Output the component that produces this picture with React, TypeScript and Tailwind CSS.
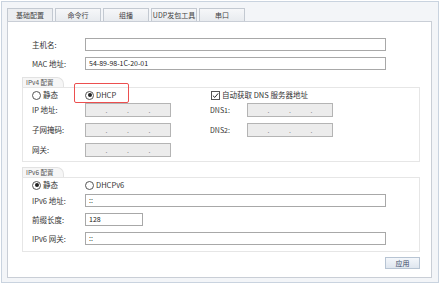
import type { ReactNode } from "react";

const font = { fontFamily: '"Noto Sans CJK SC", "Liberation Sans", sans-serif' };

const tabs = ["基础配置", "命令行", "组播", "UDP发包工具", "串口"];

function Radio({ checked, label }: { checked?: boolean; label: string }) {
  return (
    <div className="flex items-center gap-[2px] text-[7.5px] text-[#333]">
      <span className="flex size-[9px] items-center justify-center rounded-full border border-[#555] bg-white">
        {checked && <span className="size-[4px] rounded-full bg-[#222]" />}
      </span>
      <span>{label}</span>
    </div>
  );
}

function TextInput({ value = "", w = "w-[301px]" }: { value?: string; w?: string }) {
  return (
    <div
      className={`${w} flex h-[13px] items-center border border-[#a8a8a8] bg-white pl-[3px] text-[7px] leading-none text-[#222]`}
    >
      {value}
    </div>
  );
}

function IpInput() {
  return (
    <div className="flex h-[14px] w-[86px] items-center border border-[#b4b4b4] bg-[#ececec] text-[7px] leading-none text-[#888]">
      <span className="flex-1" />
      <span>.</span>
      <span className="flex-1" />
      <span>.</span>
      <span className="flex-1" />
      <span>.</span>
      <span className="flex-1" />
    </div>
  );
}

function Row({ label, children }: { label: string; children: ReactNode }) {
  return (
    <div className="flex items-center">
      <span className="w-[53px] text-[7.5px] leading-none text-[#333]">{label}</span>
      {children}
    </div>
  );
}

function Group({ title, children }: { title: string; children: ReactNode }) {
  return (
    <div className="ml-[14px] mr-[11px] flex flex-col">
      <div className="flex h-[10px] w-[42px] items-center rounded-tr-[7px] border-l border-r border-t border-[#e2e2e2] bg-[#f6f6f6] pl-[3px] text-[6.5px] leading-none text-[#555]">
        {title}
      </div>
      <div className="flex flex-col border border-[#e6e6e6] pl-[9px]">{children}</div>
    </div>
  );
}

export default function App() {
  return (
    <div className="h-[284px] w-[440px] bg-white p-px" style={font}>
      <div className="flex h-full w-full flex-col border border-[#c9d3df] bg-[#f3f5f8] pl-[5px] pr-[4px] pt-[6px]">
        <div className="flex h-[13px] gap-[2px]">
          {tabs.map((t, i) => (
            <div
              key={t}
              className={`flex w-[46px] items-center justify-center border border-b-0 border-[#c3c9d1] text-[7px] leading-none text-[#444] ${
                i === 0 ? "bg-[#eceef1]" : "bg-gradient-to-b from-[#f6f7f9] to-[#e8ebef]"
              }`}
            >
              {t}
            </div>
          ))}
        </div>

        <div className="relative flex h-[257px] w-[425px] flex-col border border-[#c9ced6] bg-white">
          <div className="flex flex-col gap-[6px] pl-[24px] pt-[16px]">
            <Row label="主机名:">
              <TextInput />
            </Row>
            <Row label="MAC 地址:">
              <TextInput value="54-89-98-1C-20-01" />
            </Row>
          </div>

          <div className="mt-[7px]">
            <Group title="IPv4 配置">
              <div className="flex h-[12px] items-center pt-[2px]">
                <div className="w-[53px]">
                  <Radio label="静态" />
                </div>
                <div className="w-[126px]">
                  <Radio checked label="DHCP" />
                </div>
                <div className="flex items-center gap-[2px] text-[7.5px] text-[#333]">
                  <span className="flex size-[9px] items-center justify-center border border-[#555] bg-white">
                    <svg viewBox="0 0 8 8" className="size-[7px]">
                      <path d="M1 4.2 L3.2 6.2 L7 1.6" fill="none" stroke="#222" strokeWidth="1.1" />
                    </svg>
                  </span>
                  <span>自动获取 DNS 服务器地址</span>
                </div>
              </div>
              <div className="flex flex-col gap-[6px] pb-[4px] pt-[3px]">
                <div className="flex items-center">
                  <Row label="IP 地址:">
                    <IpInput />
                  </Row>
                  <span className="ml-[39px] w-[37px] text-[7px] leading-none text-[#333]">DNS1:</span>
                  <IpInput />
                </div>
                <div className="flex items-center">
                  <Row label="子网掩码:">
                    <IpInput />
                  </Row>
                  <span className="ml-[39px] w-[37px] text-[7px] leading-none text-[#333]">DNS2:</span>
                  <IpInput />
                </div>
                <Row label="网关:">
                  <IpInput />
                </Row>
              </div>
            </Group>
          </div>

          <div className="mt-[5px]">
            <Group title="IPv6 配置">
              <div className="flex h-[12px] items-center pt-[2px]">
                <div className="w-[53px]">
                  <Radio checked label="静态" />
                </div>
                <Radio label="DHCPv6" />
              </div>
              <div className="flex flex-col gap-[6px] pb-[6px] pt-[4px]">
                <Row label="IPv6 地址:">
                  <TextInput value="::" />
                </Row>
                <Row label="前缀长度:">
                  <TextInput value="128" w="w-[58px]" />
                </Row>
                <Row label="IPv6 网关:">
                  <TextInput value="::" />
                </Row>
              </div>
            </Group>
          </div>

          <div className="mr-[11px] mt-[5px] flex justify-end">
            <div className="flex h-[12px] w-[35px] items-center justify-center border border-[#b7c4d3] bg-gradient-to-b from-[#f4f7fb] to-[#dfe6ef] text-[7px] leading-none text-[#3a4a66]">
              应用
            </div>
          </div>

          <div className="pointer-events-none absolute left-[66px] top-[61px] h-[20px] w-[55px] rounded-[2px] border-[1.5px] border-[#ec4f4f]" />
        </div>
      </div>
    </div>
  );
}
